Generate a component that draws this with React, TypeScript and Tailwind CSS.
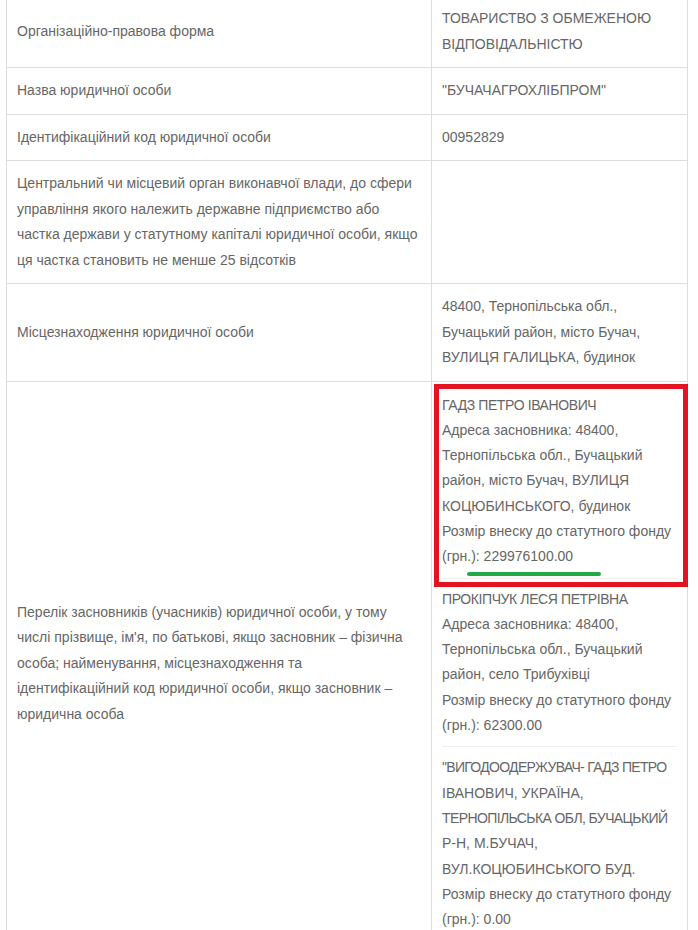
import React from "react";

type Row = { label: React.ReactNode; value?: React.ReactNode };

const rows: Row[] = [
  {
    label: "Організаційно-правова форма",
    value: (
      <>
        ТОВАРИСТВО З ОБМЕЖЕНОЮ
        <br />
        ВІДПОВІДАЛЬНІСТЮ
      </>
    ),
  },
  { label: "Назва юридичної особи", value: '"БУЧАЧАГРОХЛІБПРОМ"' },
  { label: "Ідентифікаційний код юридичної особи", value: "00952829" },
  {
    label: (
      <>
        Центральний чи місцевий орган виконавчої влади, до сфери
        <br />
        управління якого належить державне підприємство або
        <br />
        частка держави у статутному капіталі юридичної особи, якщо
        <br />
        ця частка становить не менше 25 відсотків
      </>
    ),
  },
  {
    label: "Місцезнаходження юридичної особи",
    value: (
      <>
        48400, Тернопільська обл.,
        <br />
        Бучацький район, місто Бучач,
        <br />
        ВУЛИЦЯ ГАЛИЦЬКА, будинок
      </>
    ),
  },
];

const cell = "border border-[#dddddd] px-[10px] py-[10px] align-middle";

export default function App() {
  return (
    <div
      className="min-h-screen overflow-hidden bg-white pl-[6px] text-[14px] leading-[25.5px] text-[#666666]"
      style={{ fontFamily: '"Liberation Sans", Arial, sans-serif' }}
    >
      <table className="-mt-[5px] w-[682px] table-fixed border-collapse">
        <colgroup>
          <col className="w-[425px]" />
          <col />
        </colgroup>
        <tbody>
          {rows.map((r, i) => (
            <tr key={i}>
              <td className={cell}>{r.label}</td>
              <td className={cell}>{r.value}</td>
            </tr>
          ))}

          {/* founders */}
          <tr>
            <td className={cell}>
              Перелік засновників (учасників) юридичної особи, у тому
              <br />
              числі прізвище, ім'я, по батькові, якщо засновник – фізична
              <br />
              особа; найменування, місцезнаходження та
              <br />
              ідентифікаційний код юридичної особи, якщо засновник –
              <br />
              юридична особа
            </td>
            <td className="whitespace-nowrap border border-[#dddddd] px-[10px] pt-[11px] pb-[13px] align-top leading-[25.3px]">
              <div className="relative mb-2 border-b border-[#eeeeee] pb-2">
                <span className="tracking-[-0.4px]">ГАДЗ ПЕТРО ІВАНОВИЧ</span>
                <br />
                Адреса засновника: 48400,
                <br />
                Тернопільська обл., Бучацький
                <br />
                район, місто Бучач, ВУЛИЦЯ
                <br />
                КОЦЮБИНСЬКОГО, будинок
                <br />
                Розмір внеску до статутного фонду
                <br />
                (грн.): 229976100.00
                {/* annotation overlay */}
                <div className="pointer-events-none absolute -left-[8px] -top-[9px] h-[203px] w-[254px] border-[5px] border-[#e3141f]" />
                <div className="pointer-events-none absolute left-[25px] top-[179px] h-[4px] w-[134px] rounded-full bg-[#22a845]" />
              </div>
              <div className="mb-2 border-b border-[#eeeeee] pb-2">
                <span className="tracking-[-0.4px]">ПРОКІПЧУК ЛЕСЯ ПЕТРІВНА</span>
                <br />
                Адреса засновника: 48400,
                <br />
                Тернопільська обл., Бучацький
                <br />
                район, село Трибухівці
                <br />
                Розмір внеску до статутного фонду
                <br />
                (грн.): 62300.00
              </div>
              <div>
                <span className="tracking-[-0.7px]">"ВИГОДООДЕРЖУВАЧ- ГАДЗ ПЕТРО</span>
                <br />
                ІВАНОВИЧ, УКРАЇНА,
                <br />
                <span className="tracking-[-0.6px]">ТЕРНОПІЛЬСЬКА ОБЛ, БУЧАЦЬКИЙ</span>
                <br />
                Р-Н, М.БУЧАЧ,
                <br />
                ВУЛ.КОЦЮБИНСЬКОГО БУД.
                <br />
                Розмір внеску до статутного фонду
                <br />
                (грн.): 0.00
              </div>
            </td>
          </tr>
        </tbody>
      </table>
    </div>
  );
}
